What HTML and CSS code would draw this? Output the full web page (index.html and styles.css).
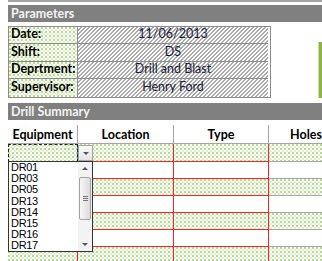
FILE: index.html
```html
<!DOCTYPE html>
<html lang="en">
<head>
    <meta charset="UTF-8">
    <title>Drill Summary</title>
    <link rel="stylesheet" href="styles.css">
</head>
<body>

<div class="sheet">
    <div class="topline"></div>
    <div class="band band-params">Parameters</div>

    <div class="params-row">
        <div class="params">
            <div class="label dots">Date:</div>
            <div class="value hatch">11/06/2013</div>
            <div class="label dots">Shift:</div>
            <div class="value hatch">DS</div>
            <div class="label dots">Deprtment:</div>
            <div class="value hatch">Drill and Blast</div>
            <div class="label dots last">Supervisor:</div>
            <div class="value hatch last">Henry Ford</div>
        </div>
        <div class="shape"></div>
    </div>

    <div class="band band-drill">Drill Summary</div>

    <div class="summary">
        <div class="row head">
            <div class="cell">Equipment</div>
            <div class="cell">Location</div>
            <div class="cell">Type</div>
            <div class="cell">Holes</div>
        </div>
        <div class="row data dots first">
            <div class="cell sel"></div><div class="cell"></div><div class="cell"></div><div class="cell"></div>
        </div>
        <div class="row data">
            <div class="cell"></div><div class="cell"></div><div class="cell"></div><div class="cell"></div>
        </div>
        <div class="row data dots">
            <div class="cell"></div><div class="cell"></div><div class="cell"></div><div class="cell"></div>
        </div>
        <div class="row data">
            <div class="cell"></div><div class="cell"></div><div class="cell"></div><div class="cell"></div>
        </div>
        <div class="row data dots">
            <div class="cell"></div><div class="cell"></div><div class="cell"></div><div class="cell"></div>
        </div>
        <div class="row data">
            <div class="cell"></div><div class="cell"></div><div class="cell"></div><div class="cell"></div>
        </div>
        <div class="row data dots">
            <div class="cell"></div><div class="cell"></div><div class="cell"></div><div class="cell"></div>
        </div>

        <!-- data validation dropdown -->
        <div class="drop-btn"><span class="tri-down"></span></div>
        <div class="drop-list">
            <ul class="items">
                <li>DR01</li>
                <li>DR03</li>
                <li>DR05</li>
                <li>DR13</li>
                <li>DR14</li>
                <li>DR15</li>
                <li>DR16</li>
                <li>DR17</li>
            </ul>
            <div class="scroll">
                <div class="arrow"><span class="tri-up"></span></div>
                <div class="thumb"><span class="grip"></span></div>
                <div class="arrow bottom"><span class="tri-down"></span></div>
            </div>
        </div>
    </div>
</div>

</body>
</html>
```

FILE: styles.css
```css
html, body { margin: 0; padding: 0; background: #fff; overflow: hidden; }
body { font-family: Lato, "Liberation Sans", sans-serif; font-size: 12.5px; color: #000; }
.sheet { width: 314px; margin-left: 8px; overflow: hidden; }

.topline { height: 2px; background: #a3a3a3; }
.band { height: 17px; background: #808080; color: #f4f4f4; font-weight: bold; padding-left: 3px; line-height: 17px; box-sizing: border-box; }
.band-params { margin-top: 3px; margin-bottom: 4px; }
.band-drill { margin-top: 5px; }

/* cell fills */
.dots {
    background-color: #fff;
    background-image: radial-gradient(circle at 1px 1px, #b4db8f 0.8px, transparent 1px),
                      radial-gradient(circle at 1px 1px, #ddefcb 0.8px, transparent 1px);
    background-size: 4px 4px;
    background-position: 0 0, 2px 2px;
}
.hatch { background: repeating-linear-gradient(135deg, #fff 0 2px, #ababab 2px 2.83px); }

/* parameters */
.params-row { display: flex; }
.params { display: grid; grid-template-columns: 69px 190px; grid-template-rows: 17px 18px 17px 18px; width: 261px; border: 1px solid #8c8c8c; }
.params div { box-sizing: border-box; border-bottom: 1px solid #8c8c8c; display: flex; align-items: flex-end; padding-bottom: 2px; }
.params .last { border-bottom: none; padding-bottom: 3px; }
.label { font-weight: bold; padding-left: 2px; border-right: 1px solid #8c8c8c; }
.value { justify-content: center; color: #1b1b3a; }
.shape { margin-left: auto; margin-top: 16px; width: 3px; height: 56px; background: #8db447; border-left: 1px solid #c9dea5; }

/* drill summary grid */
.summary { position: relative; }
.row { display: grid; grid-template-columns: 70px 96px 95px 74px; box-sizing: border-box; }
.row .cell { box-sizing: border-box; }
.head { height: 24px; padding-top: 5px; border-bottom: 1px solid #a6a6a6; font-weight: bold; }
.head .cell { display: flex; align-items: flex-end; justify-content: center; border-right: 1px solid #a6a6a6; padding-bottom: 1px; }
.head .cell:last-child { border-right: none; }
.data { height: 17px; }
.data.first { height: 18px; }
.data .cell { border-right: 1px solid #ff2020; border-bottom: 1px solid #ff2020; }
.data .cell:last-child { border-right: none; border-bottom-color: #a6a6a6; }
.sel { outline: 1px dashed #222; outline-offset: -1px; border-right-color: #2e8b8b !important; }

/* dropdown */
.drop-btn { position: absolute; left: 70px; top: 25px; width: 15px; height: 16px; box-sizing: border-box; border: 1px solid #a5a5a5; background: linear-gradient(#fafafa, #e4e4e4); display: flex; align-items: center; justify-content: center; }
.tri-down { width: 0; height: 0; border-left: 3px solid transparent; border-right: 3px solid transparent; border-top: 3px solid #555; }
.tri-up { width: 0; height: 0; border-left: 3px solid transparent; border-right: 3px solid transparent; border-bottom: 3px solid #555; }

.drop-list { position: absolute; left: 0; top: 41px; width: 85px; height: 91px; box-sizing: border-box; border: 1px solid #333; background: #fff; display: flex; }
.items { list-style: none; margin: 0; padding: 0 0 0 2px; flex: 1; font-family: "Liberation Sans", sans-serif; font-size: 11px; line-height: 11.2px; letter-spacing: -0.3px; color: #000; }
.scroll { width: 14px; background: #f3f3f3; display: flex; flex-direction: column; align-items: center; }
.arrow { height: 13px; width: 14px; display: flex; align-items: center; justify-content: center; }
.arrow.bottom { margin-top: auto; }
.thumb { margin-top: 2px; width: 12px; height: 43px; box-sizing: border-box; border: 1px solid #a3a3a3; border-radius: 2px; background: linear-gradient(90deg, #f6f6f6, #dcdcdc); display: flex; align-items: center; justify-content: center; }
.grip { width: 5px; height: 5px; background: repeating-linear-gradient(#777 0 1px, transparent 1px 2px); }
```
